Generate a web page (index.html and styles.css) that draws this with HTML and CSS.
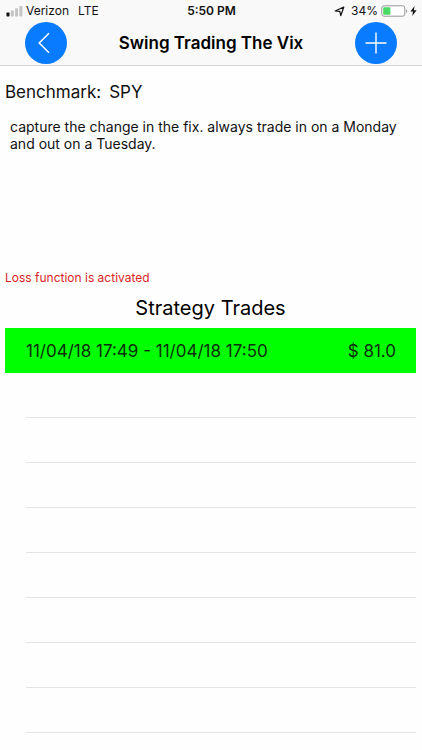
FILE: index.html
```html
<!DOCTYPE html>
<html lang="en">
<head>
<meta charset="utf-8">
<meta name="viewport" content="width=device-width, initial-scale=1">
<title>Swing Trading The Vix</title>
<link rel="stylesheet" href="styles.css">
</head>
<body>
<header class="header">
  <div class="status">
    <div class="status-side">
      <svg class="signal" width="18" height="12" viewBox="0 0 18 12" aria-hidden="true">
        <rect x="0.5" y="7.5" width="3" height="4" rx="0.7" fill="#111"/>
        <rect x="4.8" y="5.5" width="3" height="6" rx="0.7" fill="#c4c4c4"/>
        <rect x="9.1" y="3.2" width="3" height="8.3" rx="0.7" fill="#c4c4c4"/>
        <rect x="13.4" y="1" width="3" height="10.5" rx="0.7" fill="#c4c4c4"/>
      </svg>
      <span class="carrier">Verizon</span>
      <span>LTE</span>
    </div>
    <time class="clock">5:50 PM</time>
    <div class="status-side status-end">
      <svg class="location" width="11" height="11" viewBox="0 0 11 11" aria-hidden="true">
        <path d="M1.2 5 9.8 1 6.8 9.6 5.8 5.4Z" fill="none" stroke="#111" stroke-width="1.2" stroke-linejoin="round"/>
      </svg>
      <span>34%</span>
      <svg class="battery" width="36" height="12" viewBox="0 0 36 12" aria-hidden="true">
        <rect x="0.8" y="0.8" width="23" height="10.4" rx="2.2" fill="#fff" stroke="#8c8c8c" stroke-width="0.9"/>
        <rect x="2.2" y="2.2" width="7.2" height="7.6" rx="0.8" fill="#4cd964"/>
        <path d="M25.2 4.2c1.3.5 1.3 3.1 0 3.6Z" fill="#8c8c8c"/>
        <path d="M33.6 1 29.4 6.6H32L31.2 11 35.6 5.2H32.8Z" fill="#111"/>
      </svg>
    </div>
  </div>
  <nav class="nav">
    <button class="round" type="button" aria-label="Back">
      <svg width="42" height="42" viewBox="0 0 42 42" aria-hidden="true"><path d="M24 11.3 14.2 21 24 30.7" fill="none" stroke="#fff" stroke-width="1.5"/></svg>
    </button>
    <h1 class="title">Swing Trading The Vix</h1>
    <button class="round" type="button" aria-label="Add trade">
      <svg width="42" height="42" viewBox="0 0 42 42" aria-hidden="true"><path d="M21 10.5v21M10.5 21h21" fill="none" stroke="#fff" stroke-width="1.4"/></svg>
    </button>
  </nav>
</header>
<main class="content">
  <p class="benchmark"><span>Benchmark:</span><span>SPY</span></p>
  <p class="description">capture the change in the fix. always trade in on a Monday and out on a Tuesday.</p>
  <p class="warning">Loss function is activated</p>
  <h2 class="heading">Strategy Trades</h2>
  <ul class="trades">
    <li class="trade"><span>11/04/18 17:49 - 11/04/18 17:50</span><span>$ 81.0</span></li>
    <li class="empty"></li>
    <li class="empty"></li>
    <li class="empty"></li>
    <li class="empty"></li>
    <li class="empty"></li>
    <li class="empty"></li>
    <li class="empty"></li>
    <li class="empty"></li>
  </ul>
</main>
</body>
</html>
```
FILE: styles.css
```css
* {
  box-sizing: border-box;
}

body {
  margin: 0;
  background: #fefefe;
  color: #111;
  font-family: Inter, "Liberation Sans", sans-serif;
}

h1, h2, p, ul {
  margin: 0;
  padding: 0;
  font-weight: 400;
}

.header {
  background: #f9f9f9;
  border-bottom: 1px solid #d4d4d4;
}

.status {
  display: flex;
  height: 22px;
  padding: 0 5px 0 6px;
  align-items: center;
  font-size: 12px;
  line-height: 22px;
}

.status-side {
  display: flex;
  flex: 1;
  align-items: center;
}

.status-end {
  justify-content: flex-end;
}

.signal {
  margin-right: 2px;
}

.carrier {
  margin-right: 9px;
}

.clock {
  font-weight: 600;
}

.location {
  margin-right: 6px;
}

.battery {
  margin-left: 3px;
}

.nav {
  display: flex;
  height: 43px;
  padding: 0 25px;
  align-items: flex-start;
  justify-content: space-between;
}

.round {
  width: 42px;
  height: 42px;
  padding: 0;
  border: 0;
  border-radius: 50%;
  background: #087bfe;
}

.round svg {
  display: block;
}

.title {
  color: #000;
  font-size: 17px;
  font-weight: 600;
  line-height: 42px;
}

.content {
  padding: 14px 6px 0 5px;
}

.benchmark {
  display: flex;
  gap: 8px;
  font-size: 17px;
  line-height: 24px;
}

.description {
  height: 162px;
  padding: 14px 5px 0;
  font-size: 14px;
  line-height: 17px;
}

.warning {
  color: #d81e1e;
  font-size: 12px;
  line-height: 24px;
}

.heading {
  color: #000;
  font-size: 20px;
  line-height: 36px;
  text-align: center;
}

.trades {
  padding-top: 2px;
  list-style: none;
}

.trade {
  display: flex;
  height: 45px;
  padding: 0 20px 0 21px;
  align-items: center;
  justify-content: space-between;
  background: #00ff00;
  color: #0b300b;
  font-size: 17px;
}

.empty {
  height: 45px;
  margin-left: 21px;
  border-bottom: 1px solid #e4e4e4;
}
```
